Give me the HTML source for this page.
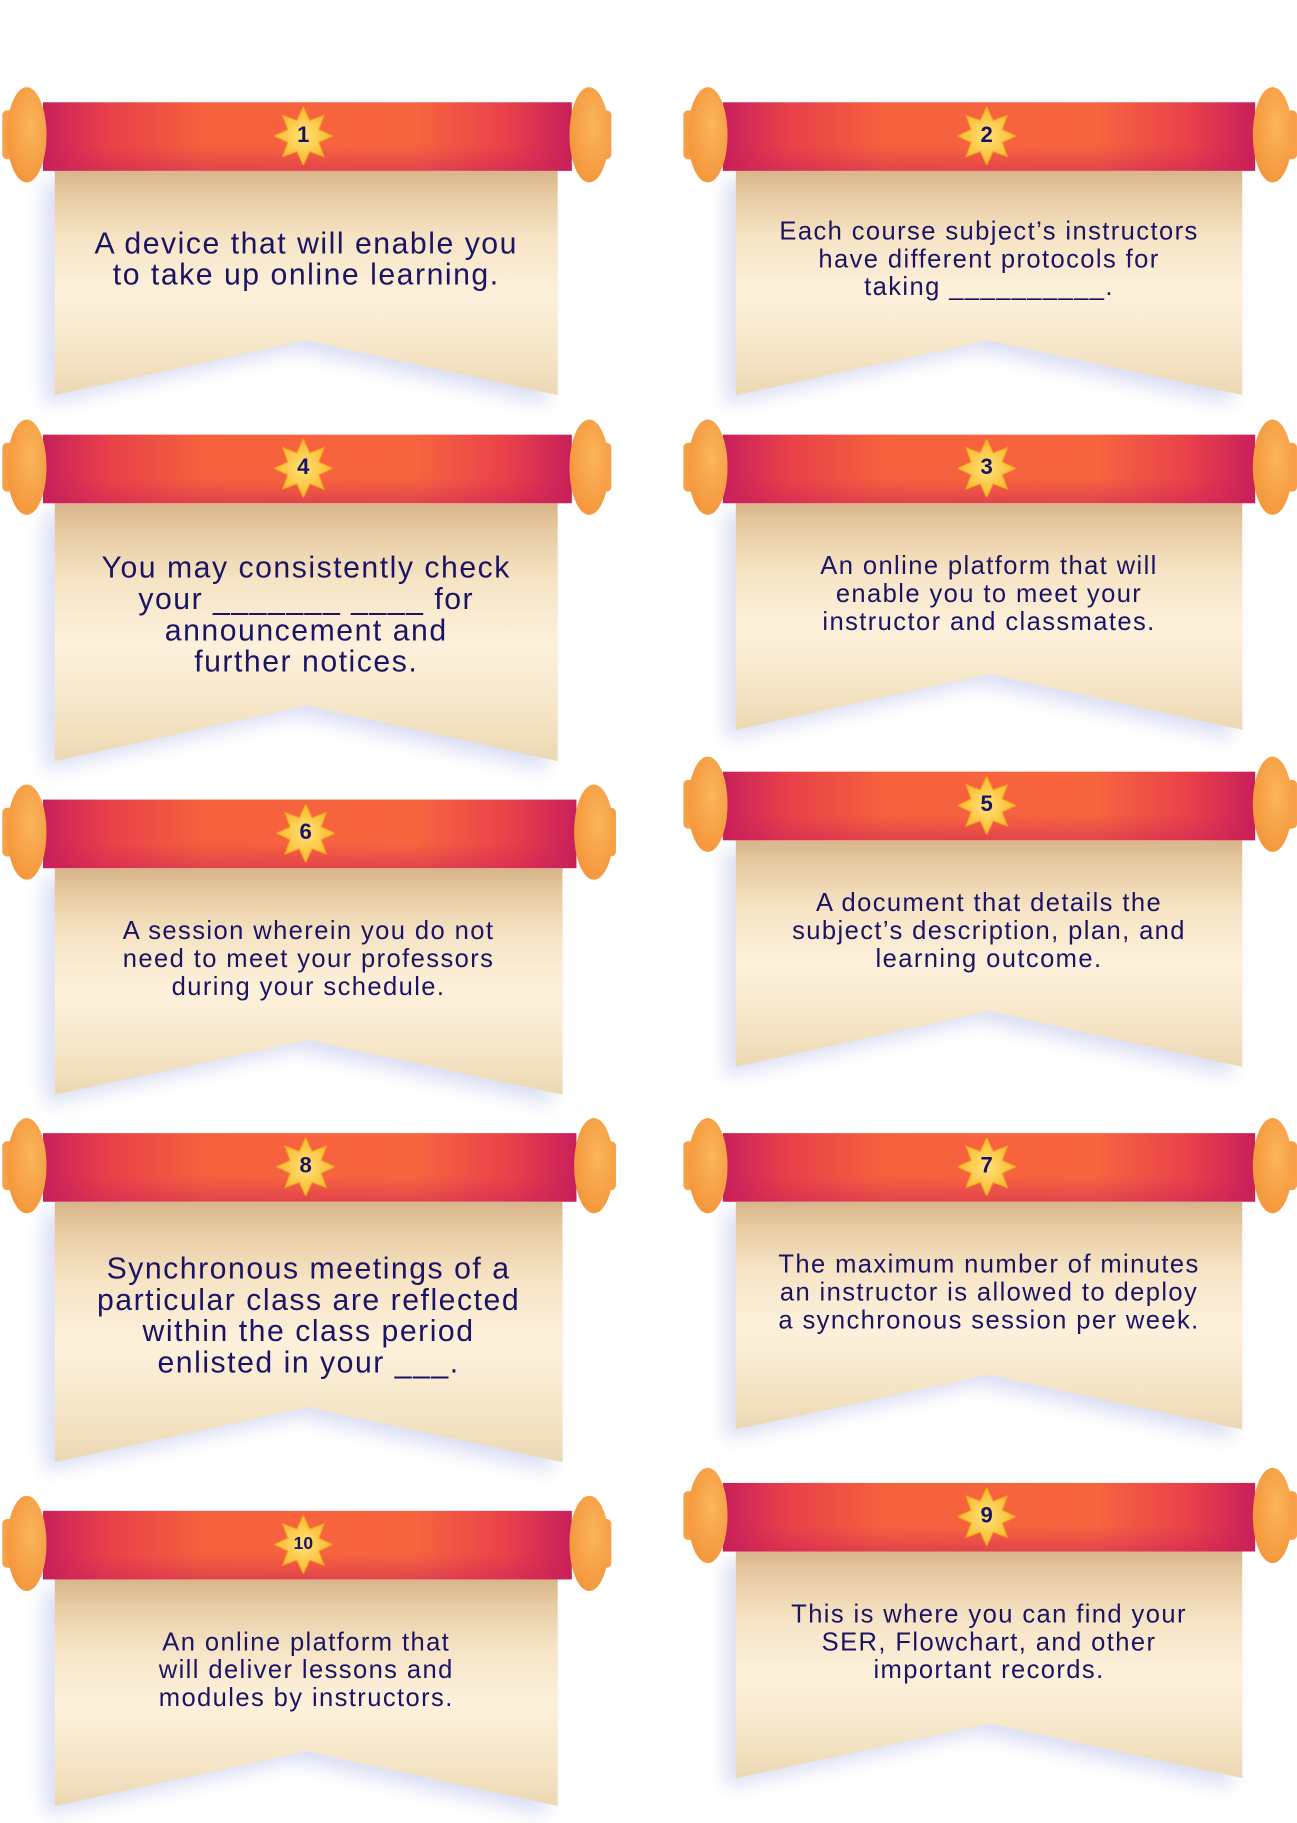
<!DOCTYPE html>
<html><head><meta charset="utf-8"><style>
html,body{margin:0;padding:0;background:#fff;}
body{width:1297px;height:1823px;overflow:hidden;position:relative;}
#w{position:absolute;left:0;top:0;width:1116px;height:1569px;transform:scale(1.16219);transform-origin:0 0;}
.s{position:absolute;}
.bar{position:absolute;height:59px;background:linear-gradient(90deg,#c81f5b 0%,#e8404a 12%,#f6613d 30%,#f7653f 70%,#e8404a 88%,#c81f5b 100%);}
.bar:after{content:"";position:absolute;left:0;right:0;bottom:0;height:22px;background:linear-gradient(180deg,rgba(200,30,90,0),rgba(200,30,90,.45));}
.k{position:absolute;top:0;width:34px;height:82px;border-radius:50%;background:radial-gradient(ellipse at 60% 40%,#fbb55a,#f5983e 70%,#f08a37);}
.k2{position:absolute;top:20px;width:10px;height:42px;border-radius:4px;background:#f7a048;}
.pw{position:absolute;filter:drop-shadow(-9px 8px 8px rgba(150,160,220,.35));}
.p{position:absolute;left:0;top:0;right:0;bottom:0;background:linear-gradient(180deg,#d9b48a 0%,#e8cda5 12%,#f6e4c5 30%,#fdf1dc 55%,#f6e6c8 80%,#ecd7b3 100%);}
.t{position:absolute;left:0;right:0;display:flex;align-items:center;justify-content:center;text-align:center;color:#1b1464;font-family:"Liberation Sans",sans-serif;}
.b{font-size:26px;line-height:27px;letter-spacing:1.3px;}
.m{font-size:22px;line-height:24px;letter-spacing:1.2px;}
.st{position:absolute;width:50px;height:50px;}
.st span{position:absolute;left:0;top:0;width:50px;height:50px;text-align:center;font:bold 19px "Liberation Sans",sans-serif;line-height:50px;color:#1b1464;}
</style></head><body><div id="w">

<svg width="0" height="0" style="position:absolute"><defs><radialGradient id="sg" cx="50%" cy="50%" r="50%"><stop offset="0" stop-color="#ffe27a"/><stop offset="1" stop-color="#f9b92a"/></radialGradient></defs></svg>

<!-- L1 -->
<div class="s" style="left:2px;top:75px;width:526px;height:270px">
 <div class="pw" style="left:45px;top:72px;width:433px;height:193px"><div class="p" style="clip-path:polygon(0 0,100% 0,100% 100%,50% 146px,0 100%)"></div></div>
 <div class="bar" style="left:35px;top:13px;width:455px"></div>
 <div class="k2" style="left:0px"></div><div class="k" style="left:4px"></div>
 <div class="k2" style="left:514px"></div><div class="k" style="left:488px"></div>
 <div class="st" style="left:234px;top:17px"><svg width="50" height="50"><polygon points="25,0 30.5,11.7 42.7,7.3 38.3,19.5 50,25 38.3,30.5 42.7,42.7 30.5,38.3 25,50 19.5,38.3 7.3,42.7 11.7,30.5 0,25 11.7,19.5 7.3,7.3 19.5,11.7" fill="url(#sg)" stroke="#f4a623"/></svg><span>1</span></div>
 <div class="t b" style="left:45px;width:433px;top:72px;height:152px">A device that will enable you<br>to take up online learning.</div>
</div>

<!-- R2 -->
<div class="s" style="left:588px;top:75px;width:528px;height:270px">
 <div class="pw" style="left:45px;top:72px;width:436px;height:193px"><div class="p" style="clip-path:polygon(0 0,100% 0,100% 100%,50% 146px,0 100%)"></div></div>
 <div class="bar" style="left:34px;top:13px;width:458px"></div>
 <div class="k2" style="left:0px"></div><div class="k" style="left:4px"></div>
 <div class="k2" style="left:518px"></div><div class="k" style="left:490px"></div>
 <div class="st" style="left:236px;top:17px"><svg width="50" height="50"><polygon points="25,0 30.5,11.7 42.7,7.3 38.3,19.5 50,25 38.3,30.5 42.7,42.7 30.5,38.3 25,50 19.5,38.3 7.3,42.7 11.7,30.5 0,25 11.7,19.5 7.3,7.3 19.5,11.7" fill="url(#sg)" stroke="#f4a623"/></svg><span>2</span></div>
 <div class="t m" style="left:45px;width:436px;top:72px;height:152px">Each course subject’s instructors<br>have different protocols for<br>taking __________.</div>
</div>

<!-- L4 -->
<div class="s" style="left:2px;top:361px;width:526px;height:300px">
 <div class="pw" style="left:45px;top:72px;width:433px;height:222px"><div class="p" style="clip-path:polygon(0 0,100% 0,100% 100%,50% 174px,0 100%)"></div></div>
 <div class="bar" style="left:35px;top:13px;width:455px"></div>
 <div class="k2" style="left:0px"></div><div class="k" style="left:4px"></div>
 <div class="k2" style="left:514px"></div><div class="k" style="left:488px"></div>
 <div class="st" style="left:234px;top:17px"><svg width="50" height="50"><polygon points="25,0 30.5,11.7 42.7,7.3 38.3,19.5 50,25 38.3,30.5 42.7,42.7 30.5,38.3 25,50 19.5,38.3 7.3,42.7 11.7,30.5 0,25 11.7,19.5 7.3,7.3 19.5,11.7" fill="url(#sg)" stroke="#f4a623"/></svg><span>4</span></div>
 <div class="t b" style="left:45px;width:433px;top:72px;height:192px">You may consistently check<br>your _______ ____ for<br>announcement and<br>further notices.</div>
</div>

<!-- R3 -->
<div class="s" style="left:588px;top:361px;width:528px;height:270px">
 <div class="pw" style="left:45px;top:72px;width:436px;height:195px"><div class="p" style="clip-path:polygon(0 0,100% 0,100% 100%,50% 147px,0 100%)"></div></div>
 <div class="bar" style="left:34px;top:13px;width:458px"></div>
 <div class="k2" style="left:0px"></div><div class="k" style="left:4px"></div>
 <div class="k2" style="left:518px"></div><div class="k" style="left:490px"></div>
 <div class="st" style="left:236px;top:17px"><svg width="50" height="50"><polygon points="25,0 30.5,11.7 42.7,7.3 38.3,19.5 50,25 38.3,30.5 42.7,42.7 30.5,38.3 25,50 19.5,38.3 7.3,42.7 11.7,30.5 0,25 11.7,19.5 7.3,7.3 19.5,11.7" fill="url(#sg)" stroke="#f4a623"/></svg><span>3</span></div>
 <div class="t m" style="left:45px;width:436px;top:72px;height:156px">An online platform that will<br>enable you to meet your<br>instructor and classmates.</div>
</div>

<!-- L6 -->
<div class="s" style="left:2px;top:675px;width:530px;height:275px">
 <div class="pw" style="left:45px;top:72px;width:437px;height:195px"><div class="p" style="clip-path:polygon(0 0,100% 0,100% 100%,50% 148px,0 100%)"></div></div>
 <div class="bar" style="left:35px;top:13px;width:459px"></div>
 <div class="k2" style="left:0px"></div><div class="k" style="left:4px"></div>
 <div class="k2" style="left:518px"></div><div class="k" style="left:492px"></div>
 <div class="st" style="left:236px;top:17px"><svg width="50" height="50"><polygon points="25,0 30.5,11.7 42.7,7.3 38.3,19.5 50,25 38.3,30.5 42.7,42.7 30.5,38.3 25,50 19.5,38.3 7.3,42.7 11.7,30.5 0,25 11.7,19.5 7.3,7.3 19.5,11.7" fill="url(#sg)" stroke="#f4a623"/></svg><span>6</span></div>
 <div class="t m" style="left:45px;width:437px;top:72px;height:156px">A session wherein you do not<br>need to meet your professors<br>during your schedule.</div>
</div>

<!-- R5 -->
<div class="s" style="left:588px;top:651px;width:528px;height:275px">
 <div class="pw" style="left:45px;top:72px;width:436px;height:195px"><div class="p" style="clip-path:polygon(0 0,100% 0,100% 100%,50% 147px,0 100%)"></div></div>
 <div class="bar" style="left:34px;top:13px;width:458px"></div>
 <div class="k2" style="left:0px"></div><div class="k" style="left:4px"></div>
 <div class="k2" style="left:518px"></div><div class="k" style="left:490px"></div>
 <div class="st" style="left:236px;top:17px"><svg width="50" height="50"><polygon points="25,0 30.5,11.7 42.7,7.3 38.3,19.5 50,25 38.3,30.5 42.7,42.7 30.5,38.3 25,50 19.5,38.3 7.3,42.7 11.7,30.5 0,25 11.7,19.5 7.3,7.3 19.5,11.7" fill="url(#sg)" stroke="#f4a623"/></svg><span>5</span></div>
 <div class="t m" style="left:45px;width:436px;top:72px;height:156px">A document that details the<br>subject’s description, plan, and<br>learning outcome.</div>
</div>

<!-- L8 -->
<div class="s" style="left:2px;top:962px;width:530px;height:300px">
 <div class="pw" style="left:45px;top:72px;width:437px;height:224px"><div class="p" style="clip-path:polygon(0 0,100% 0,100% 100%,50% 177px,0 100%)"></div></div>
 <div class="bar" style="left:35px;top:13px;width:459px"></div>
 <div class="k2" style="left:0px"></div><div class="k" style="left:4px"></div>
 <div class="k2" style="left:518px"></div><div class="k" style="left:492px"></div>
 <div class="st" style="left:236px;top:17px"><svg width="50" height="50"><polygon points="25,0 30.5,11.7 42.7,7.3 38.3,19.5 50,25 38.3,30.5 42.7,42.7 30.5,38.3 25,50 19.5,38.3 7.3,42.7 11.7,30.5 0,25 11.7,19.5 7.3,7.3 19.5,11.7" fill="url(#sg)" stroke="#f4a623"/></svg><span>8</span></div>
 <div class="t b" style="left:45px;width:437px;top:72px;height:196px">Synchronous meetings of a<br>particular class are reflected<br>within the class period<br>enlisted in your ___.</div>
</div>

<!-- R7 -->
<div class="s" style="left:588px;top:962px;width:528px;height:275px">
 <div class="pw" style="left:45px;top:72px;width:436px;height:196px"><div class="p" style="clip-path:polygon(0 0,100% 0,100% 100%,50% 149px,0 100%)"></div></div>
 <div class="bar" style="left:34px;top:13px;width:458px"></div>
 <div class="k2" style="left:0px"></div><div class="k" style="left:4px"></div>
 <div class="k2" style="left:518px"></div><div class="k" style="left:490px"></div>
 <div class="st" style="left:236px;top:17px"><svg width="50" height="50"><polygon points="25,0 30.5,11.7 42.7,7.3 38.3,19.5 50,25 38.3,30.5 42.7,42.7 30.5,38.3 25,50 19.5,38.3 7.3,42.7 11.7,30.5 0,25 11.7,19.5 7.3,7.3 19.5,11.7" fill="url(#sg)" stroke="#f4a623"/></svg><span>7</span></div>
 <div class="t m" style="left:45px;width:436px;top:72px;height:156px">The maximum number of minutes<br>an instructor is allowed to deploy<br>a synchronous session per week.</div>
</div>

<!-- L10 -->
<div class="s" style="left:2px;top:1287px;width:526px;height:275px">
 <div class="pw" style="left:45px;top:72px;width:433px;height:195px"><div class="p" style="clip-path:polygon(0 0,100% 0,100% 100%,50% 148px,0 100%)"></div></div>
 <div class="bar" style="left:35px;top:13px;width:455px"></div>
 <div class="k2" style="left:0px"></div><div class="k" style="left:4px"></div>
 <div class="k2" style="left:514px"></div><div class="k" style="left:488px"></div>
 <div class="st" style="left:234px;top:17px"><svg width="50" height="50"><polygon points="25,0 30.5,11.7 42.7,7.3 38.3,19.5 50,25 38.3,30.5 42.7,42.7 30.5,38.3 25,50 19.5,38.3 7.3,42.7 11.7,30.5 0,25 11.7,19.5 7.3,7.3 19.5,11.7" fill="url(#sg)" stroke="#f4a623"/></svg><span style="font-size:15px;line-height:50px">10</span></div>
 <div class="t m" style="left:45px;width:433px;top:72px;height:156px">An online platform that<br>will deliver lessons and<br>modules by instructors.</div>
</div>

<!-- R9 -->
<div class="s" style="left:588px;top:1263px;width:528px;height:275px">
 <div class="pw" style="left:45px;top:72px;width:436px;height:195px"><div class="p" style="clip-path:polygon(0 0,100% 0,100% 100%,50% 148px,0 100%)"></div></div>
 <div class="bar" style="left:34px;top:13px;width:458px"></div>
 <div class="k2" style="left:0px"></div><div class="k" style="left:4px"></div>
 <div class="k2" style="left:518px"></div><div class="k" style="left:490px"></div>
 <div class="st" style="left:236px;top:17px"><svg width="50" height="50"><polygon points="25,0 30.5,11.7 42.7,7.3 38.3,19.5 50,25 38.3,30.5 42.7,42.7 30.5,38.3 25,50 19.5,38.3 7.3,42.7 11.7,30.5 0,25 11.7,19.5 7.3,7.3 19.5,11.7" fill="url(#sg)" stroke="#f4a623"/></svg><span>9</span></div>
 <div class="t m" style="left:45px;width:436px;top:72px;height:156px">This is where you can find your<br>SER, Flowchart, and other<br>important records.</div>
</div>

</div></body></html>
